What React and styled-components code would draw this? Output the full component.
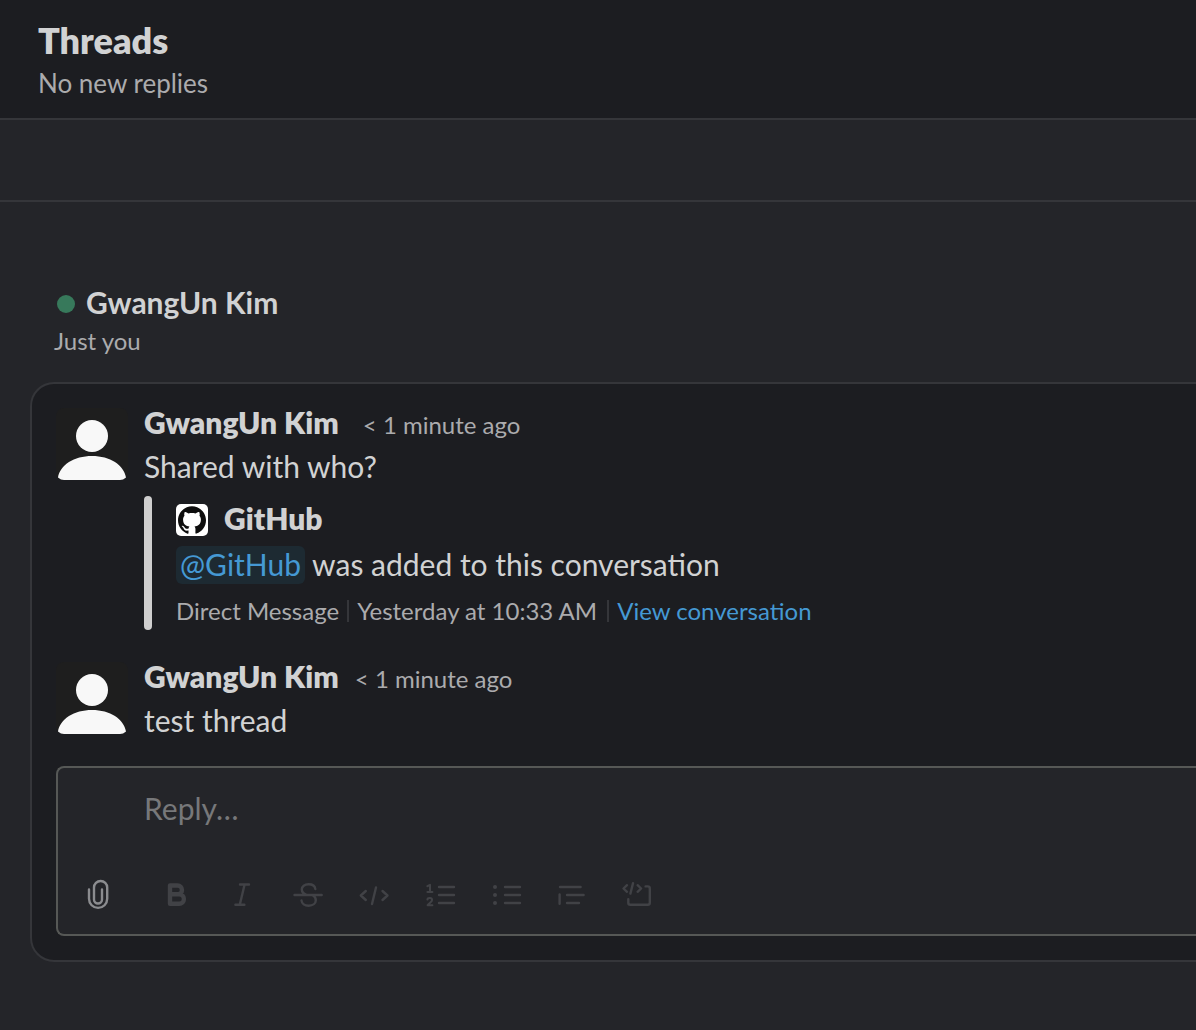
import React from "react";
import styled, { createGlobalStyle } from "styled-components";
import { SiGithub } from "react-icons/si";

const color = {
  base: "#1c1d21",
  panel: "#242529",
  line: "#35363a",
  field: "#565856",
  text: "#d1d2d3",
  muted: "#ababad",
  faint: "#77787a",
  disabled: "#414246",
  link: "#4599d4",
  mention: "#1d2a32",
  online: "#37795b",
};

const GlobalStyle = createGlobalStyle`
  * { box-sizing: border-box; }
  body {
    margin: 0;
    background: ${color.panel};
    color: ${color.text};
    font-family: Lato, "Noto Sans", sans-serif;
    font-size: 30px;
    line-height: 44px;
  }
  h1, h2, h3, p { margin: 0; }
`;

const Page = styled.main`
  min-height: 100vh;
  overflow-x: hidden;
`;

const Header = styled.header`
  height: 120px;
  padding: 18px 38px 0;
  background: ${color.base};
  border-bottom: 2px solid ${color.line};
`;

const Title = styled.h1`
  font-size: 36px;
  font-weight: 800;
  line-height: 44px;
`;

const Subtitle = styled.p`
  color: ${color.muted};
  font-size: 26px;
  line-height: 42px;
`;

const Strip = styled.div`
  height: 82px;
  border-bottom: 2px solid ${color.line};
`;

const Thread = styled.section`
  padding: 78px 0 68px 30px;
`;

const Conversation = styled.div`
  padding-left: 24px;
  margin-bottom: 24px;
`;

const ConversationName = styled.h2`
  display: flex;
  align-items: center;
  gap: 11px;
  padding-left: 3px;
  font-size: 30px;
  font-weight: 700;
  line-height: 44px;
`;

const Presence = styled.span`
  width: 18px;
  height: 18px;
  margin-top: 4px;
  border-radius: 50%;
  background: ${color.online};
`;

const Members = styled.p`
  color: ${color.muted};
  font-size: 24px;
  line-height: 34px;
`;

const Card = styled.div`
  padding: 16px 0 24px 24px;
  background: ${color.base};
  border: 2px solid ${color.line};
  border-right: 0;
  border-radius: 24px 0 0 24px;
`;

const MessageRow = styled.article`
  display: flex;
  gap: 16px;
  margin-bottom: 24px;
`;

const AvatarFrame = styled.svg`
  flex: none;
  width: 72px;
  height: 72px;
  margin-top: 8px;
  border-radius: 8px;
  background: #1e1e1e;
`;

const MessageBody = styled.div`
  flex: 1;
  min-width: 0;
`;

const Byline = styled.div`
  display: flex;
  align-items: baseline;
  gap: ${(p) => p.$gap}px;
`;

const Author = styled.h3`
  font-size: 30px;
  font-weight: 800;
  line-height: 44px;
`;

const Time = styled.time`
  color: ${color.muted};
  font-size: 24px;
  line-height: 34px;
`;

const Attachment = styled.div`
  display: flex;
  gap: 24px;
  margin-top: 8px;
`;

const Bar = styled.span`
  width: 8px;
  border-radius: 8px;
  background: #cfcfcf;
`;

const AttachmentBody = styled.div`
  display: grid;
  grid-template-rows: 46px 44px 44px;
`;

const Source = styled.div`
  display: flex;
  align-items: flex-start;
  gap: 16px;
`;

const Logo = styled.span`
  display: grid;
  place-items: center;
  width: 32px;
  height: 32px;
  margin-top: 8px;
  border-radius: 5px;
  background: #fff;
  color: #0d0d0d;
`;

const Mention = styled.a`
  padding: 0 4px 2px;
  border-radius: 6px;
  background: ${color.mention};
  color: ${color.link};
  text-decoration: none;
`;

const Footer = styled.div`
  display: flex;
  align-items: center;
  padding-top: 6px;
  color: ${color.muted};
  font-size: 24px;
  line-height: 34px;
`;

const Divider = styled.span`
  width: 2px;
  height: 22px;
  margin: 0 8px 0 ${(p) => p.$before}px;
  background: ${color.line};
`;

const Link = styled.a`
  color: ${color.link};
  text-decoration: none;
`;

const Composer = styled.form`
  background: ${color.panel};
  border: 2px solid ${color.field};
  border-right: 0;
  border-radius: 8px 0 0 8px;
`;

const ReplyField = styled.textarea`
  display: block;
  width: 100%;
  height: 92px;
  padding: 18px 24px 18px 86px;
  border: 0;
  outline: 0;
  resize: none;
  background: transparent;
  color: ${color.text};
  font: inherit;
  &::placeholder { color: ${color.faint}; opacity: 1; }
`;

const Toolbar = styled.div`
  display: flex;
  gap: 14px;
  padding: 5px 8px 9px;
`;

const Formatting = styled.div`
  display: flex;
`;

const ToolButton = styled.button`
  display: grid;
  place-items: center;
  width: ${(p) => (p.$active ? 64 : 66)}px;
  height: 60px;
  padding: 0;
  border: 0;
  background: transparent;
  color: ${(p) => (p.$active ? "#8b8c8f" : color.disabled)};
`;

const Glyph = styled.svg`
  width: 40px;
  height: 40px;
  fill: none;
  stroke: currentColor;
  stroke-width: 2.4;
  stroke-linecap: round;
  stroke-linejoin: round;
`;

const tools = [
  {
    label: "Bold",
    art: <path strokeWidth="4.4" d="M13 10.500h7.600a4.400 4.400 0 0 1 0 8.800H13zM13 19.300h9.200a4.700 4.700 0 0 1 0 9.400H13z" />,
  },
  { label: "Italic", art: <path d="M17 9.500h9M12.400 29.800h9M21.600 9.500l-4.800 20.300" /> },
  {
    label: "Strikethrough",
    art: (
      <path d="M5.500 20h27.200M26.300 14c-.3-3-3-4.700-6.700-4.700-4 0-6.800 2.100-6.800 5.100 0 2.900 2 4.400 5.200 5.600M12.500 25.500c.3 3 3.100 5.200 7.100 5.200 4.300 0 7.200-2.300 7.200-5.500 0-2-1-3.700-2.800-4.800" />
    ),
  },
  { label: "Code", art: <path d="M10.800 16l-5 4.500 5 4.500M27.500 16l5 4.500-5 4.500M21 12.500l-4 16.500" /> },
  {
    label: "Ordered list",
    art: (
      <>
        <path d="M18 12h15M18 20h15M18 28h15" />
        <path strokeWidth="2" d="M6.400 11.200L9 9.800V17M6.400 17h5M6.400 24.600c.3-2.100 4.700-2.200 4.700.4 0 1.800-2.800 3-4.500 5.200h4.800" />
      </>
    ),
  },
  {
    label: "Bulleted list",
    art: (
      <>
        <path d="M18 12h15M18 20h15M18 28h15" />
        <path strokeWidth="4" d="M8 12h.01M8 20h.01M8 28h.01" />
      </>
    ),
  },
  { label: "Blockquote", art: <path d="M7 12h20.600M14 20h16.600M14 28h12M6.600 19.500v9.300" /> },
  {
    label: "Code block",
    art: (
      <path d="M8 10.200l-3.500 3.300L8 16.800M18.600 10.200l3.500 3.300-3.500 3.300M14 8.200l-2.600 10.400M26.600 11.400h2.200a2 2 0 0 1 2 2v14.300a2 2 0 0 1-2 2h-17.500a2 2 0 0 1-2-2v-3.400" />
    ),
  },
];

function Avatar() {
  return (
    <AvatarFrame viewBox="0 0 72 72" aria-hidden="true">
      <circle cx="36" cy="28" r="16" fill="#f8f8f8" />
      <path fill="#f8f8f8" d="M4 72a2 2 0 0 1-2-2.400C4 57 18 48 36 48s32 9 34 21.600a2 2 0 0 1-2 2.400z" />
    </AvatarFrame>
  );
}

function Message({ author, time, text, gap, children }) {
  return (
    <MessageRow>
      <Avatar />
      <MessageBody>
        <Byline $gap={gap}>
          <Author>{author}</Author>
          <Time>{time}</Time>
        </Byline>
        <p>{text}</p>
        {children}
      </MessageBody>
    </MessageRow>
  );
}

export default function App() {
  return (
    <Page>
      <GlobalStyle />
      <Header>
        <Title>Threads</Title>
        <Subtitle>No new replies</Subtitle>
      </Header>
      <Strip />
      <Thread>
        <Conversation>
          <ConversationName>
            <Presence />
            GwangUn Kim
          </ConversationName>
          <Members>Just you</Members>
        </Conversation>
        <Card>
          <Message author="GwangUn Kim" time="< 1 minute ago" text="Shared with who?" gap={24}>
            <Attachment>
              <Bar />
              <AttachmentBody>
                <Source>
                  <Logo>
                    <SiGithub size={28} aria-hidden="true" />
                  </Logo>
                  <Author>GitHub</Author>
                </Source>
                <p>
                  <Mention href="#github">@GitHub</Mention> was added to this conversation
                </p>
                <Footer>
                  <span>Direct Message</span>
                  <Divider $before={8} />
                  <span>Yesterday at 10:33 AM</span>
                  <Divider $before={10} />
                  <Link href="#conversation">View conversation</Link>
                </Footer>
              </AttachmentBody>
            </Attachment>
          </Message>
          <Message author="GwangUn Kim" time="< 1 minute ago" text="test thread" gap={16} />
          <Composer>
            <ReplyField aria-label="Reply" placeholder="Reply…" />
            <Toolbar>
              <ToolButton type="button" aria-label="Attach file" $active>
                <Glyph viewBox="0 0 40 40">
                  <path d="M11 14.500V23.800a9.100 9.100 0 0 0 18.200 0V12.600a6.600 6.600 0 0 0-13.200 0V24.500a4 4 0 0 0 8 0V14.500" />
                </Glyph>
              </ToolButton>
              <Formatting>
                {tools.map((tool) => (
                  <ToolButton key={tool.label} type="button" aria-label={tool.label} disabled>
                    <Glyph viewBox="0 0 40 40">{tool.art}</Glyph>
                  </ToolButton>
                ))}
              </Formatting>
            </Toolbar>
          </Composer>
        </Card>
      </Thread>
    </Page>
  );
}
